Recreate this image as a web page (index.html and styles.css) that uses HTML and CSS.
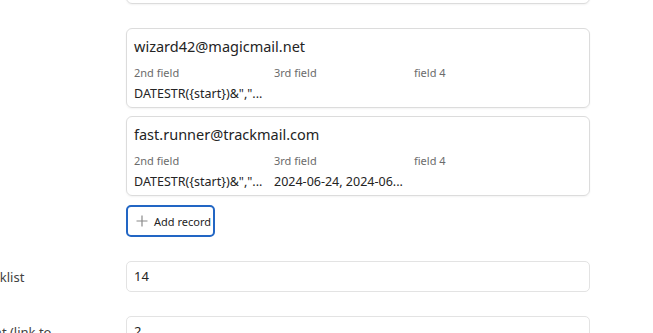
FILE: index.html
```html
<!DOCTYPE html>
<html lang="en">
<head>
  <meta charset="UTF-8" />
  <title>Records</title>
  <link rel="stylesheet" href="styles.css">
</head>
<body>

  <div class="form">

    <div class="row">
      <div class="label"></div>
      <div class="field">
        <div class="card">
          <div class="card-title">night.owl@starpost.org</div>
          <div class="cols">
            <span class="col-label">2nd field</span>
            <span class="col-label">3rd field</span>
            <span class="col-label">field 4</span>
          </div>
          <div class="cols">
            <span class="col-value">DATESTR({start})&amp;","...</span>
            <span class="col-value"></span>
            <span class="col-value"></span>
          </div>
        </div>
      </div>
    </div>

    <div class="row">
      <div class="label"></div>
      <div class="field">
        <div class="card">
          <div class="card-title">wizard42@magicmail.net</div>
          <div class="cols">
            <span class="col-label">2nd field</span>
            <span class="col-label">3rd field</span>
            <span class="col-label">field 4</span>
          </div>
          <div class="cols">
            <span class="col-value">DATESTR({start})&amp;","...</span>
            <span class="col-value"></span>
            <span class="col-value"></span>
          </div>
        </div>

        <div class="card">
          <div class="card-title">fast.runner@trackmail.com</div>
          <div class="cols">
            <span class="col-label">2nd field</span>
            <span class="col-label">3rd field</span>
            <span class="col-label">field 4</span>
          </div>
          <div class="cols">
            <span class="col-value">DATESTR({start})&amp;","...</span>
            <span class="col-value">2024-06-24, 2024-06...</span>
            <span class="col-value"></span>
          </div>
        </div>

        <button class="add-btn">
          <svg class="plus" width="12" height="12" viewBox="0 0 12 12">
            <path d="M6 0.5v11M0.5 6h11" stroke="#8a8a8a" stroke-width="1.2" fill="none"/>
          </svg>
          <span>Add record</span>
        </button>
      </div>
    </div>

    <div class="row">
      <div class="label">Checklist</div>
      <div class="field">
        <div class="input">14</div>
      </div>
    </div>

    <div class="row">
      <div class="label">Sprint (link to Sprints)</div>
      <div class="field">
        <div class="input">2</div>
      </div>
    </div>

  </div>

</body>
</html>
```

FILE: styles.css
```css
body {
  margin: 0;
  font-family: 'Noto Sans', sans-serif;
  background: white;
  color: #242424;
  overflow: hidden;
}

.form {
  margin-top: -76px;
  margin-left: -30px;
  display: flex;
  flex-direction: column;
  gap: 24px;
}

.row {
  display: grid;
  grid-template-columns: 156px 464px;
}

.label {
  font-size: 13px;
  line-height: 19px;
  color: #424242;
  padding-top: 7px;
  max-width: 96px;
}

.field {
  display: flex;
  flex-direction: column;
  gap: 8px;
}

.card {
  border: 1px solid #dcdcdc;
  border-radius: 6px;
  padding: 7px 7px 3px;
  height: 80px;
  box-sizing: border-box;
  box-shadow: 0 1px 2px rgba(0,0,0,0.05);
}

.card-title {
  font-size: 14.5px;
  line-height: 20px;
  height: 20px;
  margin-bottom: 9px;
}

.cols {
  display: grid;
  grid-template-columns: 140px 140px 140px;
}

.col-label {
  font-size: 11px;
  line-height: 16px;
  color: #6b6b6b;
  margin-bottom: 3px;
}

.col-value {
  font-size: 12.5px;
  line-height: 20px;
  height: 20px;
  white-space: nowrap;
}

.add-btn {
  align-self: flex-start;
  display: flex;
  align-items: center;
  gap: 6px;
  width: 89px;
  height: 32px;
  margin-top: 1px;
  padding: 0 8px;
  background: white;
  border: 2px solid #2266c4;
  border-radius: 5px;
  font-family: 'Noto Sans', sans-serif;
  font-size: 11px;
  color: #242424;
  white-space: nowrap;
  cursor: pointer;
}

.plus {
  flex-shrink: 0;
}

.input {
  border: 1px solid #e3e3e3;
  border-radius: 5px;
  height: 31px;
  box-sizing: border-box;
  padding: 0 7px;
  font-size: 13px;
  line-height: 29px;
}
```
